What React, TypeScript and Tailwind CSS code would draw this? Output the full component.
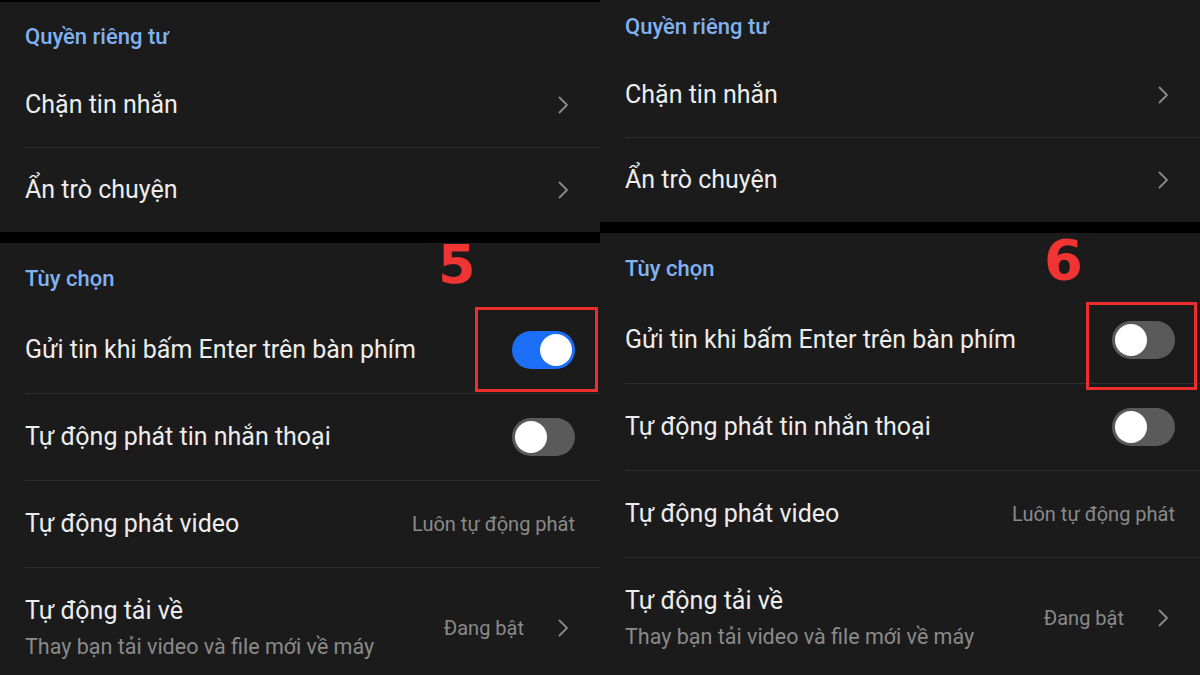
import React from "react";

type Item =
  | { kind: "link"; label: string }
  | { kind: "toggle"; label: string; on: boolean }
  | { kind: "value"; label: string; value: string }
  | { kind: "sub"; label: string; sub: string; value: string };

function Chevron() {
  return (
    <svg width="11" height="18" viewBox="0 0 11 18" className="mr-[6px] shrink-0">
      <path d="M1.5 1.5 L9 9 L1.5 16.5" fill="none" stroke="#8a8a8a" strokeWidth="1.8" strokeLinecap="round" strokeLinejoin="round" />
    </svg>
  );
}

function Toggle({ on }: { on: boolean }) {
  return (
    <div
      className={
        "w-[63px] h-[38px] rounded-full flex items-center px-[3px] shrink-0 " +
        (on ? "bg-[#1b6ef5] justify-end" : "bg-[#5a5a5a] justify-start")
      }
    >
      <div className="w-[32px] h-[32px] rounded-full bg-white" />
    </div>
  );
}

function Row({ item, last, h }: { item: Item; last?: boolean; h: string }) {
  return (
    <div
      className={
        "flex items-center justify-between pr-[25px] " +
        h +
        (last ? "" : " border-b border-[#2e2e2e]")
      }
    >
      {item.kind === "sub" ? (
        <div className="flex flex-col gap-[9px]">
          <span className="text-[25px] leading-[28px] text-[#ededed]">{item.label}</span>
          <span className="text-[21.5px] leading-[26px] text-[#8a8a8a]">{item.sub}</span>
        </div>
      ) : (
        <span className="text-[25px] leading-[28px] text-[#ededed]">{item.label}</span>
      )}
      {item.kind === "link" && <Chevron />}
      {item.kind === "toggle" && <Toggle on={item.on} />}
      {item.kind === "value" && (
        <span className="text-[20px] leading-[24px] text-[#8a8a8a]">{item.value}</span>
      )}
      {item.kind === "sub" && (
        <div className="flex items-center gap-[34px]">
          <span className="text-[20px] leading-[24px] text-[#8a8a8a]">{item.value}</span>
          <Chevron />
        </div>
      )}
    </div>
  );
}

function Panel({
  top,
  enterOn,
  step,
}: {
  top: boolean;
  enterOn: boolean;
  step: "5" | "6";
}) {
  const privacy: Item[] = [
    { kind: "link", label: "Chặn tin nhắn" },
    { kind: "link", label: "Ẩn trò chuyện" },
  ];
  const options: Item[] = [
    { kind: "toggle", label: "Gửi tin khi bấm Enter trên bàn phím", on: enterOn },
    { kind: "toggle", label: "Tự động phát tin nhắn thoại", on: false },
    { kind: "value", label: "Tự động phát video", value: "Luôn tự động phát" },
    {
      kind: "sub",
      label: "Tự động tải về",
      sub: "Thay bạn tải video và file mới về máy",
      value: "Đang bật",
    },
  ];

  return (
    <div className={"relative w-[600px] h-[675px] overflow-hidden flex flex-col bg-black " + (top ? "pt-[2px]" : "")}>
      <section className="bg-[#1b1b1b] pl-[25px] shrink-0">
        <div className={"flex items-end pb-[14px] " + (top ? "h-[61px]" : "h-[53px]")}>
          <span className="text-[22px] leading-[24px] font-medium text-[#80b2f2]">Quyền riêng tư</span>
        </div>
        {privacy.map((it, i) => (
          <Row key={i} item={it} last={i === privacy.length - 1} h={i === 0 ? "h-[85px]" : "h-[84px]"} />
        ))}
      </section>

      <section className="bg-[#1b1b1b] pl-[25px] mt-[11px] flex-1">
        <div className="h-[64px] flex items-end pb-[16px]">
          <span className="text-[22px] leading-[24px] font-medium text-[#80b2f2]">Tùy chọn</span>
        </div>
        {options.map((it, i) => (
          <Row
            key={i}
            item={it}
            last={i === options.length - 1}
            h={it.kind === "sub" ? "h-[120px]" : "h-[87px]"}
          />
        ))}
      </section>

      {/* step annotation */}
      {step === "5" ? (
        <>
          <span className="absolute left-[438px] top-[238px] font-['DejaVu_Sans'] font-bold text-[54px] leading-none text-[#f03333]">
            5
          </span>
          <div className="absolute left-[475px] top-[307px] w-[123px] h-[85px] border-[3px] border-[#ee2e2e]" />
        </>
      ) : (
        <>
          <span className="absolute left-[444px] top-[232px] font-['DejaVu_Sans'] font-bold text-[56px] leading-none text-[#f03333]">
            6
          </span>
          <div className="absolute left-[486px] top-[302px] w-[111px] h-[88px] border-[3px] border-[#ee2e2e]" />
        </>
      )}
    </div>
  );
}

export default function App() {
  return (
    <div className="w-[1200px] h-[675px] overflow-hidden flex bg-black font-['Roboto',sans-serif]">
      <Panel top enterOn step="5" />
      <Panel top={false} enterOn={false} step="6" />
    </div>
  );
}
